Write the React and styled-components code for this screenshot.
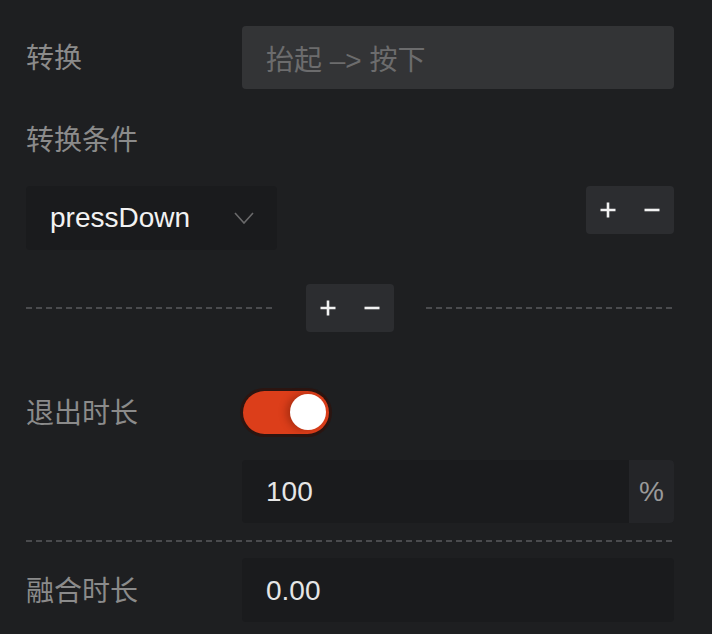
import React from "react";
import styled, { createGlobalStyle } from "styled-components";

const Global = createGlobalStyle`
  html, body { margin: 0; padding: 0; background: #1e1f21; }
  * { box-sizing: border-box; }
`;

const FONT = `"Liberation Sans", "Noto Sans CJK SC", sans-serif`;

const Page = styled.div`
  min-height: 100vh;
  width: 712px;
  padding: 26px 38px 0 26px;
  background: #1e1f21;
  font-family: ${FONT};
  font-size: 28px;
  display: flex;
  flex-direction: column;
`;

const FieldRow = styled.div`
  display: grid;
  grid-template-columns: 216px 1fr;
  align-items: center;
  height: ${(p) => p.$h}px;
  margin-top: ${(p) => p.$mt || 0}px;
`;

const Label = styled.div`
  color: #8b8b8b;
  font-size: 28px;
  line-height: 40px;
  padding-top: 3px;
  white-space: nowrap;
`;

const SectionTitle = styled(Label)`
  margin-top: 29px;
  height: 40px;
`;

const Field = styled.div`
  height: 100%;
  display: flex;
  align-items: center;
  padding-left: 24px;
  padding-right: ${(p) => (p.$suffixed ? 0 : 24)}px;
  border-radius: 4px;
  background: ${(p) => (p.$disabled ? "#333436" : "#1a1b1d")};
  color: ${(p) => (p.$disabled ? "#6c6c6d" : "#e6e6e6")};
  font-size: 28px;
  overflow: hidden;
`;

const FieldValue = styled.span`
  flex: 1;
  white-space: nowrap;
  padding-top: 1px;
`;

const Suffix = styled.span`
  width: 45px;
  height: 100%;
  display: flex;
  align-items: center;
  justify-content: center;
  background: #242528;
  color: #9a9a9a;
`;

const ConditionRow = styled.div`
  margin-top: 28px;
  display: flex;
  justify-content: space-between;
  align-items: flex-start;
`;

const Select = styled.div`
  width: 251px;
  height: 64px;
  border-radius: 4px;
  background: #1a1b1d;
  display: flex;
  align-items: center;
  justify-content: space-between;
  padding: 0 23px 0 24px;
  color: #f2f2f2;
  font-size: 28px;
`;

const PlusMinusGroup = styled.div`
  width: 88px;
  height: 48px;
  border-radius: 4px;
  background: #2c2d30;
  display: flex;
  flex-shrink: 0;
`;

const IconBtn = styled.button`
  flex: 1;
  border: 0;
  background: transparent;
  padding: 0;
  display: flex;
  align-items: center;
  justify-content: center;
  cursor: pointer;
`;

const DividerRow = styled.div`
  margin-top: 34px;
  height: 48px;
  display: flex;
  align-items: center;
  gap: 32px;
`;

const Dashed = styled.div`
  flex: 1;
  height: 2px;
  background: repeating-linear-gradient(
    to right,
    #4a4b4e 0 6px,
    transparent 6px 10px
  );
`;

const LineBreak = styled(Dashed)`
  flex: none;
  margin-top: ${(p) => p.$mt}px;
  width: 100%;
`;

const IndentedRow = styled.div`
  margin-top: ${(p) => p.$mt}px;
  margin-left: 216px;
  height: ${(p) => p.$h}px;
`;

const Track = styled.div`
  width: 86px;
  height: 43px;
  border-radius: 22px;
  margin-left: 1px;
  background: #dc3e1a;
  box-shadow: 0 0 0 3px #2b1511;
  position: relative;
`;

const Knob = styled.div`
  position: absolute;
  top: 3.5px;
  right: 3px;
  width: 36px;
  height: 36px;
  border-radius: 50%;
  background: #ffffff;
  box-shadow: -4px 0 7px rgba(90, 20, 0, 0.35);
`;

const Plus = () => (
  <svg width="16" height="16" viewBox="0 0 16 16">
    <path d="M8 0.5V15.5M0.5 8H15.5" stroke="#f2f2f2" strokeWidth="2.6" />
  </svg>
);

const Minus = () => (
  <svg width="16" height="16" viewBox="0 0 16 16">
    <path d="M0.5 8H15.5" stroke="#f2f2f2" strokeWidth="2.6" />
  </svg>
);

const Chevron = () => (
  <svg width="20" height="12" viewBox="0 0 20 12">
    <path d="M1 1L10 11L19 1" fill="none" stroke="#6a6a6b" strokeWidth="1.6" />
  </svg>
);

const PlusMinus = () => (
  <PlusMinusGroup>
    <IconBtn aria-label="add"><Plus /></IconBtn>
    <IconBtn aria-label="remove"><Minus /></IconBtn>
  </PlusMinusGroup>
);

export default function App() {
  return (
    <>
      <Global />
      <Page>
        <FieldRow $h={63}>
          <Label>转换</Label>
          <Field $disabled>
            <FieldValue>抬起 –&gt; 按下</FieldValue>
          </Field>
        </FieldRow>

        <SectionTitle>转换条件</SectionTitle>

        <ConditionRow>
          <Select>
            <span>pressDown</span>
            <Chevron />
          </Select>
          <PlusMinus />
        </ConditionRow>

        <DividerRow>
          <Dashed />
          <PlusMinus />
          <Dashed />
        </DividerRow>

        <FieldRow $h={44} $mt={58}>
          <Label>退出时长</Label>
          <Track>
            <Knob />
          </Track>
        </FieldRow>

        <IndentedRow $mt={26} $h={63}>
          <Field $suffixed>
            <FieldValue>100</FieldValue>
            <Suffix>%</Suffix>
          </Field>
        </IndentedRow>

        <LineBreak $mt={17} />

        <FieldRow $h={64} $mt={16}>
          <Label>融合时长</Label>
          <Field>
            <FieldValue>0.00</FieldValue>
          </Field>
        </FieldRow>
      </Page>
    </>
  );
}
